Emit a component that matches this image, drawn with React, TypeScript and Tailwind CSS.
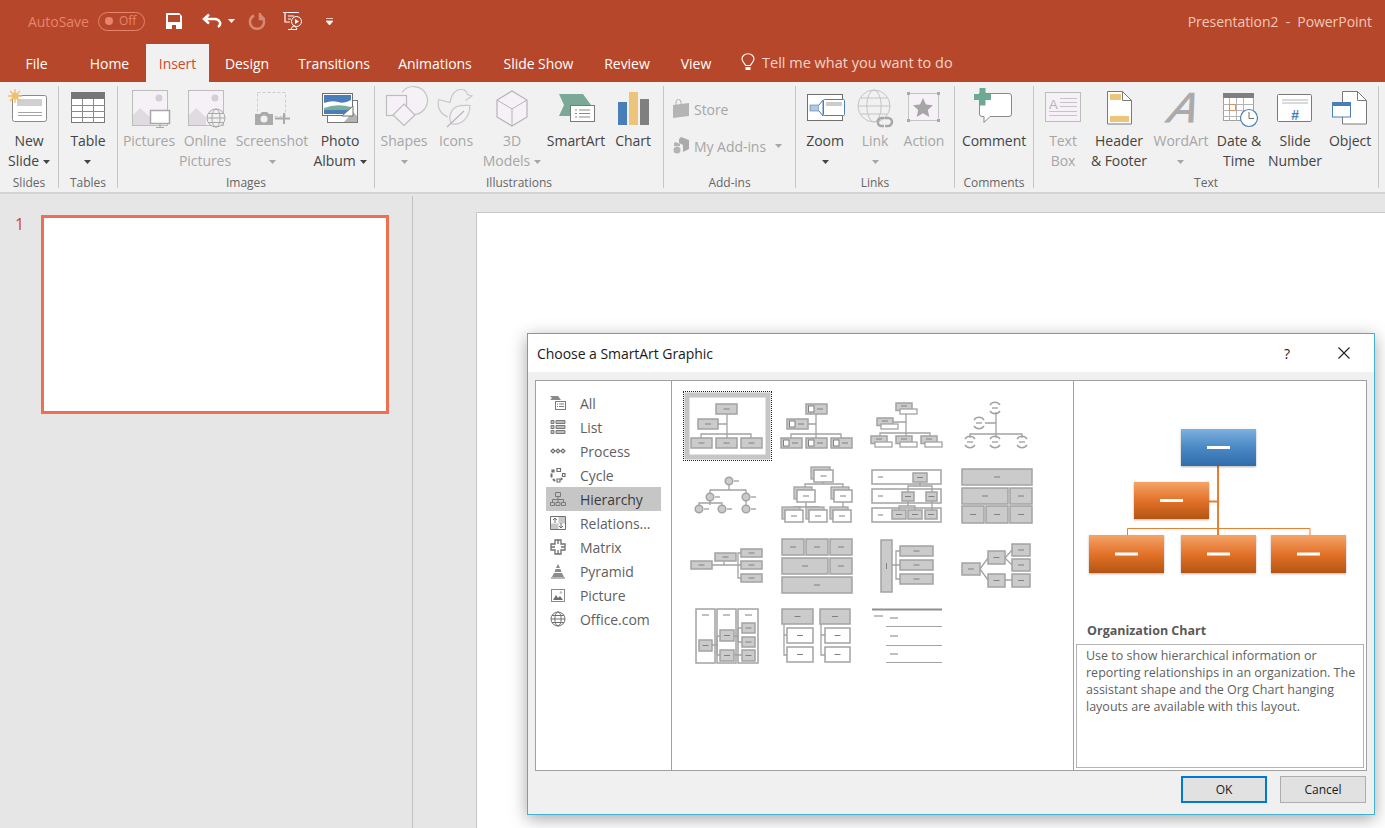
import type { ReactNode } from "react";

const LINE = "#a3a3a3";

const Caret = ({ className = "" }: { className?: string }) => (
  <svg viewBox="0 0 7 4" className={`inline-block w-[7px] h-[4px] align-middle ${className}`}>
    <path d="M0 0h7L3.5 4z" fill="currentColor" />
  </svg>
);

type BtnProps = {
  cx: number;
  w: string;
  lines: string[];
  off?: boolean;
  caret?: boolean;
  children: ReactNode;
};

// icons are drawn in page coordinates, the viewBox is centred on the button
const RibbonBtn = ({ cx, w, lines, off, caret, children }: BtnProps) => (
  <div className={`flex flex-col items-center shrink-0 ${w} ${off ? "text-[#a6a6a6]" : "text-[#444444]"}`}>
    <svg viewBox={`${cx - 30} 88 60 42`} className="w-[60px] h-[42px] shrink-0 overflow-visible">
      {children}
    </svg>
    <div className="mt-px text-center leading-[20px] whitespace-nowrap">
      <div className="h-5">{lines[0]}</div>
      <div className="h-5">
        {lines[1]}
        {caret && <Caret className={lines[1] ? "ml-1" : ""} />}
      </div>
    </div>
  </div>
);

const Group = ({ w, label, children }: { w: string; label: string; children: ReactNode }) => (
  <div className={`flex flex-col shrink-0 h-[102px] mt-[4px] border-r border-[#c6c6c6] ${w}`}>
    <div className="flex flex-none h-[89px] pt-[2px]">{children}</div>
    <div className="flex-none text-center text-[12px] leading-[16px] tracking-normal text-[#666666]">{label}</div>
  </div>
);

const Globe = ({ x, y, r, c }: { x: number; y: number; r: number; c: string }) => (
  <g fill="none" stroke={c} strokeWidth="1">
    <circle cx={x} cy={y} r={r} />
    <ellipse cx={x} cy={y} rx={r * 0.45} ry={r} />
    <path d={`M${x - r} ${y}h${r * 2}M${x - r * 0.85} ${y - r * 0.5}h${r * 1.7}M${x - r * 0.85} ${y + r * 0.5}h${r * 1.7}`} />
  </g>
);

const Tab = ({ w, children, active }: { w: string; children: ReactNode; active?: boolean }) => (
  <div
    className={`flex items-center justify-center h-[38px] shrink-0 ${w} ${
      active ? "bg-[#f1f1f1] text-[#d24726]" : "text-white"
    }`}
  >
    {children}
  </div>
);

// ---- gallery pieces

const Box = ({
  x,
  y,
  w,
  h,
  fill = "#cbcbcb",
  vertical,
  noDash,
}: {
  x: number;
  y: number;
  w: number;
  h: number;
  fill?: string;
  vertical?: boolean;
  noDash?: boolean;
}) => (
  <g>
    <rect x={x} y={y} width={w} height={h} fill={fill} stroke={LINE} strokeWidth="1.5" />
    {!noDash &&
      (vertical ? (
        <path d={`M${x + w / 2} ${y + h / 2 - 3}v6`} stroke="#808080" strokeWidth="1" />
      ) : (
        <path d={`M${x + w / 2 - 3} ${y + h / 2}h6`} stroke="#808080" strokeWidth="1" />
      ))}
  </g>
);

const Wires = ({ d }: { d: string }) => <path d={d} fill="none" stroke={LINE} strokeWidth="1.3" />;

const Tile = ({ c, r, children }: { c: number; r: number; children?: ReactNode }) => (
  <svg viewBox={`${682 + c * 90} ${391 + r * 70} 90 70`} className="w-[90px] h-[70px] blur-[0.4px]">
    {children}
  </svg>
);

const RingNode = ({ x, y }: { x: number; y: number }) => (
  <g fill="none" stroke={LINE} strokeWidth="1.5">
    <path d={`M${x - 5} ${y - 3}a6 6 0 0 1 10 0M${x - 5} ${y + 3}a6 6 0 0 0 10 0`} />
    <path d={`M${x - 3} ${y}h6`} stroke="#808080" strokeWidth="1" />
  </g>
);

const DotNode = ({ x, y }: { x: number; y: number }) => (
  <g>
    <circle cx={x} cy={y} r="3.8" fill="#cbcbcb" stroke={LINE} strokeWidth="1.5" />
    <path d={`M${x + 5} ${y}h5`} stroke="#808080" strokeWidth="1" />
  </g>
);

const Stack = ({ x, y, w, h }: { x: number; y: number; w: number; h: number }) => (
  <g>
    <rect x={x - 3} y={y - 3} width={w} height={h} fill="#cbcbcb" stroke={LINE} strokeWidth="1.3" />
    <Box x={x} y={y} w={w} h={h} fill="#ffffff" />
  </g>
);

const Gallery = () => (
  <div className="relative grid grid-cols-[repeat(4,90px)] auto-rows-[70px] pl-[10px] pt-[10px]">
    <div className="absolute left-[11px] top-[10px] w-[89px] h-[70px] border border-dotted border-[#222222]" />
    <Tile c={0} r={0}>
      <rect x="687" y="395" width="81" height="62" fill="none" stroke="#c6c6c6" strokeWidth="5" />
      <Wires d="M727 414v24M718 424h9M701 438v-4h50v4" />
      <Box x={716} y={404} w={21} h={10} />
      <Box x={698} y={419} w={20} h={10} />
      <Box x={691} y={438} w={21} h={10} />
      <Box x={716} y={438} w={21} h={10} />
      <Box x={741} y={438} w={21} h={10} />
    </Tile>
    <Tile c={1} r={0}>
      <Wires d="M816 414v24M808 424h8M791 438v-4h50v4" />
      {[
        [806, 404],
        [787, 419],
        [781, 438],
        [806, 438],
        [831, 438],
      ].map(([x, y]) => (
        <g key={`${x}-${y}`}>
          <rect x={x} y={y} width="21" height="10" fill="#cbcbcb" stroke={LINE} strokeWidth="1.5" />
          <rect x={x + 2.5} y={y + 2} width="5.5" height="6" fill="#ffffff" stroke="#808080" />
          <path d={`M${x + 11} ${y + 5}h6`} stroke="#808080" />
        </g>
      ))}
    </Tile>
    <Tile c={2} r={0}>
      <Wires d="M906 414v22M893 422h13M880 436v-3h50v3" />
      {[
        [896, 403],
        [877, 418],
        [871, 436],
        [896, 436],
        [921, 436],
      ].map(([x, y]) => (
        <g key={`${x}-${y}`}>
          <Box x={x} y={y} w={16} h={7.5} noDash />
          <path d={`M${x + 5} ${y + 3}h6`} stroke="#808080" />
          <rect x={x + 4} y={y + 6} width="17" height="5" fill="#ffffff" stroke={LINE} strokeWidth="1.3" />
        </g>
      ))}
    </Tile>
    <Tile c={3} r={0}>
      <Wires d="M996 412v26M985 423h11M970 438v-4h52v4" />
      <RingNode x={995} y={408} />
      <RingNode x={979} y={423} />
      <RingNode x={970} y={442} />
      <RingNode x={995} y={442} />
      <RingNode x={1022} y={442} />
    </Tile>

    <Tile c={0} r={1}>
      <Wires d="M729 484v6M710 493v-3h36v15M710 493v12M699 505v-2h23v2" />
      <DotNode x={729} y={481} />
      <DotNode x={710} y={497} />
      <DotNode x={746} y={497} />
      <DotNode x={699} y={509} />
      <DotNode x={722} y={509} />
      <DotNode x={746} y={509} />
    </Tile>
    <Tile c={1} r={1}>
      <Wires d="M823 482v2M805 490v-6h38v6M806 502v5M794 510v-3h25v3M843 502v8" />
      <Stack x={814} y={470} w={19} h={12} />
      <Stack x={797} y={490} w={18} h={12} />
      <Stack x={834} y={490} w={18} h={12} />
      <Stack x={785} y={510} w={18} h={12} />
      <Stack x={809} y={510} w={18} h={12} />
      <Stack x={833} y={510} w={18} h={12} />
    </Tile>
    <Tile c={2} r={1}>
      <Box x={872} y={470} w={69} h={14} fill="#ffffff" noDash />
      <Box x={872} y={489} w={69} h={14} fill="#ffffff" noDash />
      <Box x={872} y={508} w={69} h={14} fill="#ffffff" noDash />
      <path d="M878 477h5M878 496h5M878 515h5" stroke="#808080" />
      <Wires d="M920 482v4M908 492v-6h24v6M908 501v5M899 510v-4h16v4M932 501v9" />
      <Box x={913} y={473} w={14} h={9} />
      <Box x={902} y={492} w={12} h={9} />
      <Box x={926} y={492} w={11} h={9} />
      <Box x={892} y={510} w={14} h={9} />
      <Box x={908} y={510} w={14} h={9} />
      <Box x={925} y={510} w={12} h={9} />
    </Tile>
    <Tile c={3} r={1}>
      <Box x={962} y={469} w={70} h={16} />
      <Box x={962} y={488} w={46} h={16} />
      <Box x={1010} y={488} w={22} h={16} />
      <Box x={962} y={506} w={22} h={17} />
      <Box x={986} y={506} w={22} h={17} />
      <Box x={1010} y={506} w={22} h={17} />
    </Tile>

    <Tile c={0} r={2}>
      <Wires d="M712 565h26M724 561v4M741 553h-3v25h3M738 565h3" />
      <Box x={691} y={561} w={21} h={8} />
      <Box x={715} y={553} w={21} h={8} />
      <Box x={741} y={549} w={21} h={8} />
      <Box x={741} y={561} w={21} h={8} />
      <Box x={741} y={574} w={21} h={8} />
    </Tile>
    <Tile c={1} r={2}>
      <Box x={782} y={539} w={22} h={16} />
      <Box x={806} y={539} w={22} h={16} />
      <Box x={830} y={539} w={22} h={16} />
      <Box x={782} y={558} w={46} h={16} />
      <Box x={830} y={558} w={22} h={16} />
      <Box x={782} y={577} w={70} h={16} />
    </Tile>
    <Tile c={2} r={2}>
      <Wires d="M892 565h8M900 551h-4v28h4" />
      <Box x={881} y={540} w={11} h={52} vertical />
      <Box x={900} y={546} w={33} h={10} />
      <Box x={900} y={560} w={33} h={10} />
      <Box x={900} y={574} w={33} h={10} />
    </Tile>
    <Tile c={3} r={2}>
      <Wires d="M980 569l8-11M980 569l8 11M1005 558l7-8M1005 558l7 7M1005 580h7" />
      <Box x={962} y={563} w={18} h={12} />
      <Box x={988} y={551} w={17} h={13} />
      <Box x={1012} y={544} w={18} h={12} />
      <Box x={1012} y={559} w={18} h={12} />
      <Box x={988} y={574} w={17} h={13} />
      <Box x={1012} y={574} w={18} h={13} />
    </Tile>

    <Tile c={0} r={3}>
      <Box x={696} y={609} w={19} h={54} fill="#ffffff" noDash />
      <Box x={717} y={609} w={19} h={54} fill="#ffffff" noDash />
      <Box x={738} y={609} w={20} h={54} fill="#ffffff" noDash />
      <path d="M702 615h7M723 615h7M745 615h7" stroke="#808080" />
      <Wires d="M712 645h5M717 636h3M717 655h3M717 636v19M734 636h4M738 628h4M738 642h4M738 628v14M734 655h8" />
      <Box x={699} y={640} w={13} h={11} />
      <Box x={720} y={630} w={14} h={11} />
      <Box x={720} y={650} w={14} h={11} />
      <Box x={742} y={623} w={13} h={10} />
      <Box x={742} y={637} w={13} h={10} />
      <Box x={742} y={650} w={13} h={11} />
    </Tile>
    <Tile c={1} r={3}>
      <Wires d="M784 624v31h3M784 635h3M821 624v31h4M821 635h4" />
      <Box x={782} y={609} w={31} h={15} />
      <Box x={820} y={609} w={30} h={15} />
      <Box x={787} y={628} w={26} h={15} fill="#ffffff" />
      <Box x={787} y={647} w={26} h={15} fill="#ffffff" />
      <Box x={825} y={628} w={25} h={15} fill="#ffffff" />
      <Box x={825} y={647} w={25} h={15} fill="#ffffff" />
    </Tile>
    <Tile c={2} r={3}>
      <path d="M872 609.5h70" stroke="#8f8f8f" strokeWidth="2" />
      <path d="M886 626.5h56M886 645.5h56M886 662.5h56" stroke={LINE} strokeWidth="1.2" />
      <path d="M874 616h9M890 618h8M890 636h8M890 654h8" stroke="#808080" />
    </Tile>
  </div>
);

const PreviewBox = ({ x, y, h, fill }: { x: number; y: number; h: number; fill: string }) => (
  <g filter="url(#pvShadow)">
    <rect x={x} y={y} width="75" height={h} fill={fill} />
    <rect x={x + 26} y={y + h / 2 - 1.5} width="23" height="3" fill="#ffffff" />
  </g>
);

// the big org chart on the right of the dialog, page coordinates
const Preview = () => (
  <svg viewBox="1074 381 292 240" className="w-[292px] h-[240px] shrink-0">
    <defs>
      <linearGradient id="pvBlue" x1="0" y1="0" x2="0" y2="1">
        <stop offset="0" stopColor="#7db0de" />
        <stop offset="0.5" stopColor="#4a88c5" />
        <stop offset="1" stopColor="#2f6cab" />
      </linearGradient>
      <linearGradient id="pvOrange" x1="0" y1="0" x2="0" y2="1">
        <stop offset="0" stopColor="#f4a468" />
        <stop offset="0.5" stopColor="#e3722a" />
        <stop offset="1" stopColor="#b45511" />
      </linearGradient>
      <filter id="pvShadow" x="-10%" y="-10%" width="120%" height="125%">
        <feDropShadow dx="0" dy="1" stdDeviation="1.2" floodColor="#000000" floodOpacity="0.3" />
      </filter>
    </defs>
    <path d="M1218 466v69M1209 501.5h9" stroke="#ed7d31" strokeWidth="2" fill="none" />
    <path d="M1127.5 535v-6.500h182.500v6.500" stroke="#ed7d31" strokeWidth="1" fill="none" />
    <PreviewBox x={1181} y={429} h={37} fill="url(#pvBlue)" />
    <PreviewBox x={1134} y={482} h={37} fill="url(#pvOrange)" />
    <PreviewBox x={1089} y={535} h={38} fill="url(#pvOrange)" />
    <PreviewBox x={1181} y={535} h={38} fill="url(#pvOrange)" />
    <PreviewBox x={1271} y={535} h={38} fill="url(#pvOrange)" />
  </svg>
);

// ---- category list on the left of the dialog

const catIcons: Record<string, ReactNode> = {
  All: (
    <g>
      <path d="M0 1h8l3 4H0l2-2z" fill="#8a8a8a" />
      <rect x="5.500" y="6.500" width="10" height="8" fill="#fff" stroke="#7a7a7a" />
      <path d="M7 9h1M9 9h5M7 11.500h1M9 11.500h5" stroke="#7a7a7a" />
    </g>
  ),
  List: (
    <g fill="none" stroke="#7a7a7a">
      <path d="M1 1.500h3v3H1zM1 6.500h3v3H1zM1 11.500h3v3H1z" fill="#bbb" />
      <path d="M6 1.500h9v3H6zM6 6.500h9v3H6zM6 11.500h9v3H6z" fill="#bbb" />
    </g>
  ),
  Process: (
    <g fill="none" stroke="#6f6f6f" strokeWidth="1.200">
      <path d="M1 8l2-2 2 2-2 2zM6 8l2-2 2 2-2 2zM11 8l2-2 2 2-2 2z" />
    </g>
  ),
  Cycle: (
    <g fill="none" stroke="#6f6f6f" strokeWidth="1.200">
      <path d="M7 1.500h3.500v3H7zM12.500 6.500h2.500v3h-2.500zM7 12h3v3H7z" />
      <path d="M2 3h2v2H2z" fill="#6f6f6f" />
      <path d="M1.500 6.500v4M3 12l2 2M12 11l-1 2" strokeWidth="2" />
    </g>
  ),
  Hierarchy: (
    <g fill="none" stroke="#7a7a7a">
      <path d="M5.500 1.500h5v4h-5zM.5 11.500h4v3h-4zM6 11.500h4v3H6zM11.500 11.500h4v3h-4zM8 5.500v6M2.500 11.500V8.500h11v3" />
    </g>
  ),
  "Relations...": (
    <g fill="none" stroke="#6f6f6f">
      <path d="M.5 8.500h8v6h-8z" fill="#c8c8c8" stroke="none" />
      <path d="M8.500 1.500h7v7h-7z" fill="#c8c8c8" stroke="none" />
      <path d="M.5 1.500h15v13H.5z" />
      <path d="M5 8V3M3 5l2-2 2 2M11 8v5M9 11l2 2 2-2" />
    </g>
  ),
  Matrix: (
    <g fill="none" stroke="#6f6f6f" strokeWidth="1.300">
      <path d="M5 1h6v4h4v6h-4v4H5v-4H1V5h4z" />
      <path d="M8 1v4M8 11v4M1 8h4M11 8h4" />
    </g>
  ),
  Pyramid: (
    <g fill="#8a8a8a">
      <path d="M8 1l2 4H6zM5.500 6h5l1 3h-7zM4 10h8l2 4H2z" />
      <path d="M1 15h14" stroke="#6f6f6f" />
    </g>
  ),
  Picture: (
    <g>
      <rect x="1.500" y="2.500" width="13" height="12" fill="#fff" stroke="#8a8a8a" />
      <path d="M3 13l3-5 2 3 2-2 3 4z" fill="#6f6f6f" />
      <circle cx="11" cy="5.500" r="1.200" fill="#bbb" />
    </g>
  ),
  "Office.com": <Globe x={8} y={8} r={7} c="#6f6f6f" />,
};

const categories = Object.keys(catIcons);

const CategoryList = () => (
  <div className="w-[136px] shrink-0 border-r border-[#a0a0a0] pt-[10px] pl-[10px] pr-[10px]">
    {categories.map((c) => (
      <div
        key={c}
        className={`flex items-center gap-[14px] h-6 pl-[4px] ${
          c === "Hierarchy" ? "bg-[#c6c6c6] text-[#3c3c3c]" : "text-[#5f5f5f]"
        }`}
      >
        <svg viewBox="0 0 16 16" className="w-4 h-4 shrink-0">
          {catIcons[c]}
        </svg>
        <span className="whitespace-nowrap">{c}</span>
      </div>
    ))}
  </div>
);

const Dialog = () => (
  <div className="absolute left-[527px] top-[333px] w-[848px] h-[482px] flex flex-col bg-[#f0f0f0] border border-[#3fb3cf] shadow-[0_4px_16px_rgba(0,0,0,0.35)]">
    <div className="flex items-center h-[38px] shrink-0 bg-white pl-[9px] text-[#1a1a1a]">
      <span className="flex-1">Choose a SmartArt Graphic</span>
      <span className="w-[20px] text-center mr-[41px]">?</span>
      <svg viewBox="0 0 12 12" className="w-3 h-3 mr-[24px]">
        <path d="M.5.5l11 11M11.500.5l-11 11" stroke="#222222" strokeWidth="1.100" />
      </svg>
    </div>
    <div className="flex h-[391px] mt-[8px] mx-[7px] bg-white border border-[#a0a0a0]">
      <CategoryList />
      <div className="w-[402px] shrink-0 border-r border-[#a0a0a0]">
        <Gallery />
      </div>
      <div className="flex flex-col flex-1 min-w-0">
        <Preview />
        <div className="pl-[13px] text-[12.500px] tracking-normal leading-[20px] font-bold text-[#595959]">
          Organization Chart
        </div>
        <div className="mx-[2px] mt-[3px] h-[124px] pl-[9px] pt-[2px] text-[12.500px] tracking-normal leading-[17px] text-[#5f5f5f] border border-[#b4b4b4] whitespace-nowrap">
          Use to show hierarchical information or
          <br />
          reporting relationships in an organization. The
          <br />
          assistant shape and the Org Chart hanging
          <br />
          layouts are available with this layout.
        </div>
      </div>
    </div>
    <div className="flex justify-end gap-[13px] mt-[5px] mr-[8px] text-[12px] tracking-normal text-[#1a1a1a]">
      <button className="w-[86px] h-[27px] bg-[#e1e1e1] border-2 border-[#0078d7]">OK</button>
      <button className="w-[86px] h-[27px] bg-[#e1e1e1] border border-[#adadad]">Cancel</button>
    </div>
  </div>
);

const TitleBar = () => (
  <div className="flex items-center h-[44px] pb-[2px] shrink-0">
    <span className="ml-[28px] w-[63px] whitespace-nowrap text-[#e8836c]">AutoSave</span>
    <div className="flex items-center w-[47px] h-[19px] ml-[7px] rounded-full border border-[#e8836c] pl-[6px] text-[12px] text-[#e8836c]">
      <span className="w-[8px] h-[8px] rounded-full bg-[#e8836c] mr-[6px]" />
      Off
    </div>
    <svg viewBox="0 0 16 16" className="w-4 h-4 ml-[21px]">
      <path d="M0 0h13l3 3v13H0z" fill="#ffffff" />
      <path d="M2 2h12v7H2zM6 12h4v4H6z" fill="#b7472a" />
    </svg>
    <svg viewBox="0 0 20 16" className="w-5 h-4 ml-[20px]">
      <path d="M7 1.500L2 6l5 4.500M2.500 6H12a5.500 4.500 0 0 1 4 8" fill="none" stroke="#ffffff" strokeWidth="2.500" />
    </svg>
    <Caret className="ml-[6px] text-white" />
    <svg viewBox="0 0 18 18" className="w-[18px] h-[18px] ml-[13px]">
      <path d="M6 3.500a7 7 0 1 0 6 0M12 1v6h5" fill="none" stroke="#d58a75" strokeWidth="2.500" />
    </svg>
    <svg viewBox="0 0 20 20" className="w-5 h-5 ml-[17px]">
      <path d="M0 1.500h16M2 2v9h5" fill="none" stroke="#ffffff" strokeWidth="1.200" />
      <path d="M5 5h6M5 8h3M5 18.500h9" stroke="#ffffff" />
      <circle cx="13.500" cy="10.500" r="5" fill="none" stroke="#ffffff" />
      <path d="M12 8l4 2.500-4 2.500z" fill="#ffffff" />
      <path d="M8 18l2-3h2l2 3" fill="none" stroke="#ffffff" />
    </svg>
    <svg viewBox="0 0 7 7" className="w-[7px] h-[7px] ml-[23px]">
      <path d="M0 .5h7M0 3h7L3.500 7z" stroke="#ffffff" strokeWidth=".7" fill="#ffffff" />
    </svg>
    <span className="ml-auto mr-[13px] whitespace-pre text-[#f3c7b8]">Presentation2  -  PowerPoint</span>
  </div>
);

const TabBar = () => (
  <div className="flex items-center h-[38px] shrink-0">
    <Tab w="w-[73px]">File</Tab>
    <Tab w="w-[73px]">Home</Tab>
    <Tab w="w-[63px]" active>
      Insert
    </Tab>
    <Tab w="w-[76px]">Design</Tab>
    <Tab w="w-[98px]">Transitions</Tab>
    <Tab w="w-[104px]">Animations</Tab>
    <Tab w="w-[103px]">Slide Show</Tab>
    <Tab w="w-[74px]">Review</Tab>
    <Tab w="w-[64px]">View</Tab>
    <svg viewBox="0 0 14 18" className="w-[14px] h-[18px] ml-[13px] mb-[2px]">
      <path
        d="M4.500 12.500C4 10 1 9 1 5.800a6 5 0 0 1 12 0C13 9 10 10 9.500 12.500z"
        fill="none"
        stroke="#ffffff"
        strokeWidth="1.100"
      />
      <path d="M4.500 14h5v3h-5z" fill="#ffffff" />
    </svg>
    <span className="ml-[7px] text-[14.500px] text-[#f3d5cb] tracking-normal">Tell me what you want to do</span>
  </div>
);

const Ribbon = () => (
  <div className="flex h-[112px] shrink-0 bg-[#f1f1f1] border-b-2 border-[#d4d4d4]">
    <Group w="w-[59px]" label="Slides">
      <RibbonBtn cx={29} w="w-[58px]" lines={["New", "Slide"]} caret>
        <rect x="12.500" y="95.500" width="34" height="26" rx="2" fill="#fff" stroke="#8a8a8a" />
        <rect x="17" y="99" width="25" height="7" fill="#d0d0d0" />
        <path d="M18 112.500h24M18 115.500h24" stroke="#a5a5a5" />
        <path d="M15 89v14M8 96h14M10 91l10 10M20 91l-10 10" stroke="#f0c070" strokeWidth="1.400" />
        <circle cx="15" cy="96" r="3.500" fill="#f0c070" />
      </RibbonBtn>
    </Group>
    <Group w="w-[59px]" label="Tables">
      <RibbonBtn cx={88} w="w-[58px]" lines={["Table", ""]} caret>
        <rect x="71.500" y="92.500" width="33" height="30" fill="#fff" stroke="#7a7a7a" />
        <rect x="71" y="92" width="34" height="7" fill="#767676" />
        <path d="M71 105.500h34M71 111.500h34M71 117.500h34M82.500 99v24M93.500 99v24" stroke="#8a8a8a" />
      </RibbonBtn>
    </Group>
    <Group w="w-[257px]" label="Images">
      <RibbonBtn cx={149} w="w-[62px]" lines={["Pictures"]} off>
        <rect x="132.500" y="90.500" width="35" height="35" fill="#f5f1f6" stroke="#bdbdbd" />
        <circle cx="159" cy="98" r="3.500" fill="#d4cfd4" />
        <path d="M133 125v-10l7-7 10 9v8z" fill="#e0dbe0" />
        <rect x="150.500" y="110.500" width="19" height="13" fill="#fff" stroke="#a8a8a8" strokeWidth="1.500" />
        <path d="M160 124v3M156 127.500h8" stroke="#a8a8a8" />
      </RibbonBtn>
      <RibbonBtn cx={205} w="w-[50px]" lines={["Online", "Pictures"]} off>
        <rect x="188.500" y="90.500" width="35" height="35" fill="#f5f1f6" stroke="#bdbdbd" />
        <circle cx="215" cy="98" r="3.500" fill="#d4cfd4" />
        <path d="M189 125v-10l7-7 10 9v8z" fill="#e0dbe0" />
        <circle cx="216" cy="118" r="9" fill="#f1f1f1" />
        <Globe x={216} y={118} r={9} c="#a8a8a8" />
      </RibbonBtn>
      <RibbonBtn cx={272} w="w-[84px]" lines={["Screenshot", ""]} off caret>
        <rect x="257.500" y="92.500" width="28" height="24" fill="none" stroke="#cccccc" strokeDasharray="3 2" />
        <path d="M255 114h5l2-2h5l2 2h4v11h-18z" fill="#aaaaaa" />
        <circle cx="264" cy="119" r="3.500" fill="#f1f1f1" />
        <path d="M275 118.500h4M284 113v11M279 118.500h11" stroke="#aaaaaa" strokeWidth="2" />
      </RibbonBtn>
      <RibbonBtn cx={340} w="w-[52px]" lines={["Photo", "Album"]} caret>
        <rect x="327.500" y="100.500" width="30" height="22" fill="#fff" stroke="#7a7a7a" />
        <path d="M344 122l9-10 4 4v6z" fill="#b4b4b4" />
        <rect x="322.500" y="93.500" width="30" height="22" fill="#fff" stroke="#6f6f6f" />
        <rect x="324" y="95" width="27" height="8" fill="#4a7eb8" />
        <path d="M324 103q8-3 14-1t13-2v7q-14-3-27 1z" fill="#fff" />
        <path d="M324 108q13-5 27-1v3h-27z" fill="#7aae9c" />
        <rect x="324" y="110" width="27" height="4" fill="#4a7eb8" />
        <path d="M342 116l11-10v10z" fill="#fff" stroke="#6f6f6f" />
      </RibbonBtn>
    </Group>
    <Group w="w-[289px]" label="Illustrations">
      <RibbonBtn cx={404} w="w-[58px]" lines={["Shapes", ""]} off caret>
        <path d="M402 91a14.500 14.500 0 0 1 12 24z" fill="#f5f1f6" />
        <path d="M402 92.500a14 14 0 1 1 11 22" fill="#f5f1f6" stroke="#c4c4c4" strokeWidth="1.200" />
        <rect x="386.500" y="95.500" width="20" height="20" fill="#f5f1f6" stroke="#bdbdbd" strokeWidth="1.200" />
        <path d="M404 104l11 11-11 10.500-11-10.500z" fill="#f5f1f6" stroke="#bdbdbd" strokeWidth="1.200" />
      </RibbonBtn>
      <RibbonBtn cx={456} w="w-[46px]" lines={["Icons"]} off>
        <path
          d="M438.500 99.500L450 102.500C451 97 453 89.500 461 89.500C465 89.500 467 92 467.500 94.500L472 96L465.500 100.500M438.500 99.500C437 108 441 114 448 117"
          fill="none"
          stroke="#c8c8c8"
          strokeWidth="1.200"
        />
        <path
          d="M470 105.500C469.500 118 462 125 452 124C448.500 120 449 110 457 106.500C461 105 466 105.500 470 105.500z"
          fill="#f5f1f6"
          stroke="#c8c8c8"
          strokeWidth="1.200"
        />
        <path d="M447 127L464 111" fill="none" stroke="#b8b8b8" strokeWidth="1.200" />
      </RibbonBtn>
      <RibbonBtn cx={512} w="w-[66px]" lines={["3D", "Models"]} off caret>
        <path d="M512 91l15 9v17l-15 9-15-9v-17z" fill="#f5f1f6" stroke="#b4b4b4" strokeWidth="1.200" />
        <path d="M497 100l15 9 15-9M512 109v17" fill="none" stroke="#b4b4b4" />
      </RibbonBtn>
      <RibbonBtn cx={576} w="w-[62px]" lines={["SmartArt"]}>
        <path d="M559 94h24l8 11-8 11h-24l5-11z" fill="#7aaa97" />
        <rect x="570.500" y="105.500" width="24" height="16" fill="#fff" stroke="#7a7a7a" />
        <path d="M575 110h2M579 110h11M575 113.500h2M579 113.500h11M575 117h2M579 117h11" stroke="#8a8a8a" />
      </RibbonBtn>
      <RibbonBtn cx={633} w="w-[52px]" lines={["Chart"]}>
        <rect x="618" y="102" width="9" height="23" fill="#4a7eb8" />
        <rect x="629" y="92" width="9" height="33" fill="#edc47c" />
        <rect x="640" y="99" width="9" height="26" fill="#7f7f7f" />
      </RibbonBtn>
    </Group>
    <Group w="w-[132px]" label="Add-ins">
      <div className="flex flex-col pl-[9px] pt-[9px] text-[#a6a6a6]">
        <div className="flex items-center h-6">
          <svg viewBox="0 0 16 20" className="w-4 h-5">
            <path d="M0 6l16-2v13L0 19z" fill="#b4b4b4" />
            <path d="M3 6V3a2.500 2.500 0 0 1 5 0v3" fill="none" stroke="#b4b4b4" />
          </svg>
          <span className="ml-[5px]">Store</span>
        </div>
        <div className="flex items-center h-6 mt-[13px] whitespace-nowrap">
          <svg viewBox="0 0 16 18" className="w-4 h-[18px]">
            <path d="M8 0l8 3v9l-6 3V8L6 6V2z" fill="#aaaaaa" />
            <circle cx="4" cy="13" r="3.500" fill="#b4b4b4" />
            <path d="M3 5l4 2v2H1V6z" fill="#b4b4b4" />
          </svg>
          <span className="ml-[5px]">My Add-ins</span>
          <Caret className="ml-[9px]" />
        </div>
      </div>
    </Group>
    <Group w="w-[159px]" label="Links">
      <RibbonBtn cx={825} w="w-[58px]" lines={["Zoom", ""]} caret>
        <rect x="807.500" y="94.500" width="35" height="26" fill="#fff" stroke="#6f6f6f" />
        <rect x="810" y="105" width="9" height="6" fill="#b4c7dc" stroke="#4a7eb8" strokeWidth=".6" />
        <path d="M819 105l4-5v16l-4-5" fill="#fff" stroke="#4a7eb8" />
        <rect x="823.500" y="99.500" width="21" height="16" rx="1" fill="#fff" stroke="#4a7eb8" />
        <rect x="826" y="102" width="16" height="4" fill="#cccccc" />
      </RibbonBtn>
      <RibbonBtn cx={875} w="w-[42px]" lines={["Link", ""]} off caret>
        <Globe x={874} y={106} r={16} c="#c4c4c4" />
        <path
          d="M878 122a3.500 3.500 0 0 1 3.500-4h3M884 126h-3a3.500 3.500 0 0 1-3-4M885 118h3a3.500 3.500 0 0 1 0 8h-3"
          fill="none"
          stroke="#a8a8a8"
          strokeWidth="2.500"
        />
      </RibbonBtn>
      <RibbonBtn cx={924} w="w-[56px]" lines={["Action"]} off>
        <rect x="908.500" y="93.500" width="30" height="27" fill="#f5f1f6" stroke="#c4c4c4" />
        <path d="M907 92h3v3h-3zM937 92h3v3h-3zM907 119h3v3h-3zM937 119h3v3h-3z" fill="#aaaaaa" />
        <path d="M923 98l3 6.500 7 .7-5.200 4.700 1.500 7-6.300-3.600-6.300 3.600 1.500-7-5.200-4.700 7-.7z" fill="#a6a6a6" />
      </RibbonBtn>
    </Group>
    <Group w="w-[79px]" label="Comments">
      <RibbonBtn cx={994} w="w-[78px]" lines={["Comment"]}>
        <path
          d="M979 93.500h30a2.500 2.500 0 0 1 2.500 2.500v18a2.500 2.500 0 0 1-2.500 2.500h-19l-6 6v-6h-2a2.500 2.500 0 0 1-2.500-2.500V96"
          fill="#fff"
          stroke="#8a8a8a"
        />
        <path d="M979.500 88h6v6h5.500v6h-5.500v5.500h-6V100H974v-6h5.500z" fill="#6fa893" />
      </RibbonBtn>
    </Group>
    <Group w="w-[345px]" label="Text">
      <RibbonBtn cx={1063} w="w-[58px]" lines={["Text", "Box"]} off>
        <rect x="1045.500" y="92.500" width="35" height="29" fill="#f5f1f6" stroke="#bdbdbd" />
        <text x="1049" y="109" fontSize="13" fill="#b4b4b4" fontFamily="'Liberation Sans', sans-serif">
          A
        </text>
        <path d="M1060 98.500h17M1060 102.500h17M1060 106.500h17M1049 111.500h28M1049 115.500h28" stroke="#c4c4c4" />
      </RibbonBtn>
      <RibbonBtn cx={1119} w="w-[54px]" lines={["Header", "& Footer"]}>
        <path d="M1107.500 91.500h15l9 9v23.500h-24z" fill="#fff" stroke="#7a7a7a" />
        <path d="M1122.500 91.500v9h9" fill="none" stroke="#7a7a7a" />
        <rect x="1110" y="94" width="11" height="6" fill="#edc47c" />
        <rect x="1110" y="116" width="19" height="6" fill="#edc47c" />
      </RibbonBtn>
      <RibbonBtn cx={1181} w="w-[70px]" lines={["WordArt", ""]} off caret>
        <text
          transform="translate(1167 122) skewX(-14)"
          fontSize="42"
          fontStyle="italic"
          fill="#aaaaaa"
          stroke="#aaaaaa"
          strokeWidth="1"
          fontFamily="'Liberation Sans', sans-serif"
        >
          A
        </text>
      </RibbonBtn>
      <RibbonBtn cx={1239} w="w-[46px]" lines={["Date &", "Time"]}>
        <rect x="1223.500" y="93.500" width="30" height="27" fill="#fff" stroke="#a0a0a0" />
        <rect x="1223" y="93" width="31" height="5" fill="#7f7f7f" />
        <path
          d="M1223 104.500h31M1223 110.500h31M1223 116.500h31M1229.500 98v23M1236.500 98v23M1243.500 98v23"
          stroke="#b4b4b4"
        />
        <rect x="1229.500" y="104.500" width="6" height="6" fill="#fff" stroke="#e09050" />
        <circle cx="1249" cy="118" r="8.500" fill="#fff" stroke="#4a7eb8" strokeWidth="1.200" />
        <path d="M1249 112v6.500h5" fill="none" stroke="#6f6f6f" />
      </RibbonBtn>
      <RibbonBtn cx={1295} w="w-[66px]" lines={["Slide", "Number"]}>
        <rect x="1277.500" y="94.500" width="34" height="27" rx="1" fill="#fff" stroke="#7a7a7a" />
        <path d="M1282 100h26M1282 103h26" stroke="#b4b4b4" />
        <text
          x="1295"
          y="120"
          textAnchor="middle"
          fontSize="14"
          fontWeight="700"
          fill="#4a7eb8"
          fontFamily="'Liberation Sans', sans-serif"
        >
          #
        </text>
      </RibbonBtn>
      <RibbonBtn cx={1350} w="w-[44px]" lines={["Object"]}>
        <path d="M1342.500 91.500h15l9 9v23.500h-24z" fill="#fff" stroke="#7a7a7a" />
        <path d="M1357.500 91.500v9h9" fill="none" stroke="#7a7a7a" />
        <rect x="1332.500" y="102.500" width="18" height="14.500" fill="#fff" stroke="#4a7eb8" />
        <rect x="1332" y="102" width="19" height="4" fill="#4a7eb8" />
      </RibbonBtn>
    </Group>
  </div>
);

export default function App() {
  return (
    <div className="relative flex flex-col w-[1385px] h-[828px] overflow-hidden bg-[#e6e6e6] font-['Open_Sans',sans-serif] text-[14px] tracking-[-0.05px]">
      <div className="flex flex-col bg-[#b7472a]">
        <TitleBar />
        <TabBar />
      </div>
      <Ribbon />
      <div className="flex flex-1 min-h-0">
        <div className="flex w-[413px] shrink-0 mt-[2px] border-r border-[#c0c0c0] pt-[19px] pl-[15px]">
          <span className="w-[26px] text-[16px] leading-[18px] text-[#d24726]">1</span>
          <div className="w-[348px] h-[199px] bg-white border-[3px] border-[#ee7050]" />
        </div>
        <div className="flex-1 pl-[63px] pt-[18px]">
          <div className="h-full bg-white border-l border-t border-[#c6c6c6]" />
        </div>
      </div>
      <Dialog />
    </div>
  );
}
